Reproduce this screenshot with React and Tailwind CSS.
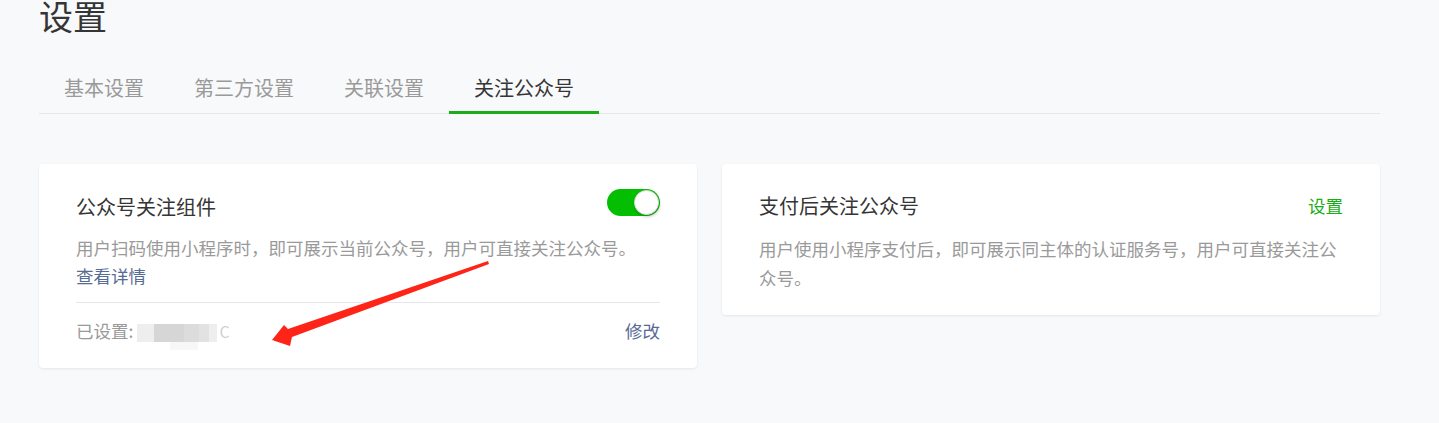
import React, { useState } from 'react';

const tabs = ['基本设置', '第三方设置', '关联设置', '关注公众号'];

const Toggle = ({ on, onChange }) => (
  <button
    onClick={() => onChange(!on)}
    className={`relative w-[53px] h-[27px] rounded-full shrink-0 mt-[-4px] ${on ? 'bg-[#04be02]' : 'bg-[#e5e5e5]'}`}
  >
    <span
      className={`absolute top-[1px] w-[25px] h-[25px] rounded-full bg-white border border-[#d9d9d9] shadow-[1px_2px_3px_rgba(0,0,0,0.2)] ${on ? 'right-[1px]' : 'left-[1px]'}`}
    />
  </button>
);

export default function App() {
  const [active, setActive] = useState(3);
  const [on, setOn] = useState(true);

  return (
    <div
      className="relative min-h-screen bg-[#f8f9fb] pl-[39px] pr-[59px] overflow-hidden"
      style={{ fontFamily: '"Noto Sans CJK SC", "Noto Sans", sans-serif' }}
    >
      <h1 className="text-[34px] leading-[40px] mt-[-4px] text-[#353535] font-normal">设置</h1>

      {/* TABS */}
      <div className="mt-[38px] flex border-b border-[#e7e7eb]">
        {tabs.map((t, i) => (
          <button
            key={t}
            onClick={() => setActive(i)}
            className={`-mb-px px-[25px] pb-[9px] text-[20px] leading-[28px] border-b-[3px] ${
              i === active ? 'border-[#1aad19] text-[#353535]' : 'border-transparent text-[#9a9a9a]'
            }`}
          >
            {t}
          </button>
        ))}
      </div>

      {/* CARDS */}
      <div className="mt-[50px] flex items-start gap-[25px]">
        <div className="w-[658px] bg-white rounded-[4px] shadow-[0_1px_3px_rgba(0,0,0,0.08)] px-[37px] pt-[29px] pb-[23px]">
          <div className="flex items-start justify-between">
            <h3 className="text-[20px] leading-[28px] text-[#353535]">公众号关注组件</h3>
            <Toggle on={on} onChange={setOn} />
          </div>
          <p className="mt-[12px] text-[17.5px] leading-[29px] text-[#9a9a9a]">
            用户扫码使用小程序时，即可展示当前公众号，用户可直接关注公众号。
          </p>
          <a className="block text-[17.5px] leading-[28px] text-[#576b95] cursor-pointer">查看详情</a>
          <div className="mt-[12px] border-t border-[#e7e7eb] pt-[14px] flex items-center justify-between">
            <div className="flex items-center text-[17.5px] leading-[28px] text-[#9a9a9a]">
              <span>已设置:</span>
              <span className="relative flex h-[18px] mt-[4px] ml-[4px]">
                <span className="w-[17px] bg-[#eeeeee]" />
                <span className="w-[30px] bg-[#d6d6d6]" />
                <span className="w-[15px] bg-[#dcdcdc]" />
                <span className="w-[10px] bg-[#e2e2e2]" />
                <span className="w-[8px] bg-[#eeeeee]" />
                <span className="absolute left-[33px] top-[18px] w-[28px] h-[8px] bg-[#f7f7f7]" />
              </span>
              <span className="ml-[2px] text-[#d0d0d0] text-[16px]">C</span>
            </div>
            <a className="text-[17.5px] leading-[28px] text-[#576b95] cursor-pointer">修改</a>
          </div>
        </div>

        <div className="w-[658px] bg-white rounded-[4px] shadow-[0_1px_3px_rgba(0,0,0,0.08)] px-[37px] pt-[28px] pb-[23px]">
          <div className="flex items-start justify-between">
            <h3 className="text-[20px] leading-[28px] text-[#353535]">支付后关注公众号</h3>
            <a className="text-[17.5px] leading-[28px] text-[#1aad19] cursor-pointer">设置</a>
          </div>
          <p className="mt-[14px] text-[17.5px] leading-[29px] text-[#9a9a9a]">
            用户使用小程序支付后，即可展示同主体的认证服务号，用户可直接关注公众号。
          </p>
        </div>
      </div>

      {/* annotation arrow */}
      <svg className="absolute left-0 top-0 pointer-events-none" width="1439" height="423">
        <polygon
          points="488,261 288,329 284,325 272,340 290,346 292,337 489,264"
          fill="#ff2418"
        />
      </svg>
    </div>
  );
}
